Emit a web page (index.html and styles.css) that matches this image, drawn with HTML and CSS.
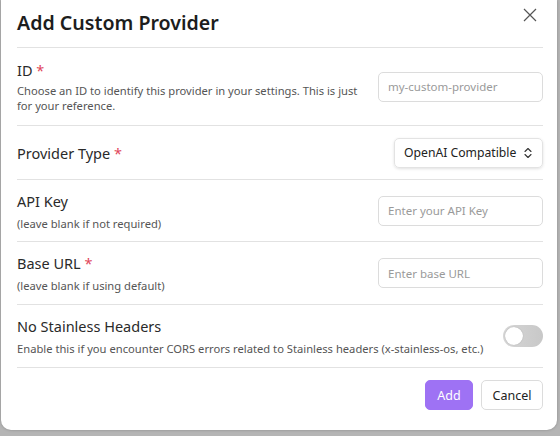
FILE: index.html
```html
<!DOCTYPE html>
<html>
<head>
<meta charset="utf-8">
<link rel="stylesheet" href="styles.css">
</head>
<body>
<div class="dialog">
  <div class="header">
    <h1 class="title">Add Custom Provider</h1>
    <button class="close" aria-label="Close">
      <svg width="14" height="14" viewBox="0 0 14 14"><path d="M1 1L13 13M13 1L1 13" stroke="#555" stroke-width="1.2" fill="none"/></svg>
    </button>
  </div>
  <div class="row row-id">
    <div class="info">
      <div class="label">ID <span class="req">*</span></div>
      <div class="desc">Choose an ID to identify this provider in your settings. This is just for your reference.</div>
    </div>
    <input class="input" type="text" placeholder="my-custom-provider">
  </div>
  <div class="row row-type">
    <div class="info">
      <div class="label">Provider Type <span class="req">*</span></div>
    </div>
    <div class="select">
      <span>OpenAI Compatible</span>
      <svg width="10" height="12" viewBox="0 0 10 12"><path d="M2 4.5L5 1.5L8 4.5M2 7.5L5 10.5L8 7.5" stroke="#333" stroke-width="1.1" fill="none" stroke-linecap="round" stroke-linejoin="round"/></svg>
    </div>
  </div>
  <div class="row">
    <div class="info">
      <div class="label">API Key</div>
      <div class="desc">(leave blank if not required)</div>
    </div>
    <input class="input" type="text" placeholder="Enter your API Key">
  </div>
  <div class="row row-tall">
    <div class="info">
      <div class="label">Base URL <span class="req">*</span></div>
      <div class="desc">(leave blank if using default)</div>
    </div>
    <input class="input" type="text" placeholder="Enter base URL">
  </div>
  <div class="row row-tall">
    <div class="info">
      <div class="label">No Stainless Headers</div>
      <div class="desc">Enable this if you encounter CORS errors related to Stainless headers (x-stainless-os, etc.)</div>
    </div>
    <div class="toggle"><span class="knob"></span></div>
  </div>
  <div class="footer">
    <button class="btn btn-primary">Add</button>
    <button class="btn btn-secondary">Cancel</button>
  </div>
</div>
</body>
</html>
```
FILE: styles.css
```css
* { box-sizing: border-box; }
html, body { margin: 0; padding: 0; }
body {
  width: 560px;
  height: 436px;
  background: #b5b5b5;
  font-family: "Noto Sans", "Open Sans", sans-serif;
  color: #222;
  overflow: hidden;
}
.dialog {
  width: 556px;
  height: 430px;
  margin-left: 1px;
  background: #fff;
  border-radius: 0 0 10px 10px;
  padding: 0 14px 0 16px;
  box-shadow: 0 0 3px rgba(0,0,0,0.25);
}
.header {
  display: flex;
  justify-content: space-between;
  align-items: flex-start;
  height: 48px;
  border-bottom: 1px solid #e2e2e2;
}
.title {
  margin: 9px 0 0 0;
  font-size: 19.6px;
  font-weight: 600;
  color: #1d1d1d;
}
.close {
  margin: 8px 6px 0 0;
  padding: 0;
  border: 0;
  background: none;
  width: 14px;
  height: 14px;
}
.row {
  display: flex;
  justify-content: space-between;
  align-items: center;
  border-bottom: 1px solid #e2e2e2;
  height: 62px;
}
.row-id { height: 78px; }
.row-type { height: 54px; }
.row-tall { height: 63px; }
.info { display: flex; flex-direction: column; }
.label {
  font-size: 14.5px;
  color: #2a2a2a;
  line-height: 20px;
}
.req { color: #e0455a; }
.desc {
  font-size: 11.2px;
  color: #555;
  line-height: 15px;
  margin-top: 5px;
}
.row-id .desc { max-width: 348px; margin-top: 3px; }
.input {
  width: 165px;
  height: 30px;
  border: 1px solid #dcdcdc;
  border-radius: 5px;
  padding: 0 9px;
  font-family: inherit;
  font-size: 11.5px;
  color: #222;
  outline: none;
  flex-shrink: 0;
}
.input::placeholder { color: #9a9a9a; }
.select {
  display: flex;
  align-items: center;
  gap: 7px;
  height: 30px;
  width: 149px;
  padding: 0 8px 0 9px;
  border: 1px solid #e3e3e3;
  border-radius: 5px;
  box-shadow: 0 1px 3px rgba(0,0,0,0.12);
  font-size: 12.2px;
  color: #222;
  white-space: nowrap;
}
.toggle {
  width: 40px;
  height: 22px;
  border-radius: 11px;
  background: linear-gradient(90deg, #d6d6d6, #c8c8c8);
  position: relative;
  flex-shrink: 0;
}
.knob {
  position: absolute;
  left: 2px;
  top: 2px;
  width: 18px;
  height: 18px;
  border-radius: 50%;
  background: #fff;
  box-shadow: 0 0 1px rgba(0,0,0,0.3);
}
.footer {
  display: flex;
  justify-content: flex-end;
  gap: 8px;
  padding-top: 12px;
}
.btn {
  height: 30px;
  border-radius: 5px;
  font-family: inherit;
  font-size: 12.5px;
  padding: 0 8px;
}
.btn-primary {
  background: #9e72f4;
  border: 1px solid #9e72f4;
  color: #fff;
  width: 48px;
}
.btn-secondary {
  background: #fff;
  border: 1px solid #dcdcdc;
  color: #222;
  width: 62px;
}
```
